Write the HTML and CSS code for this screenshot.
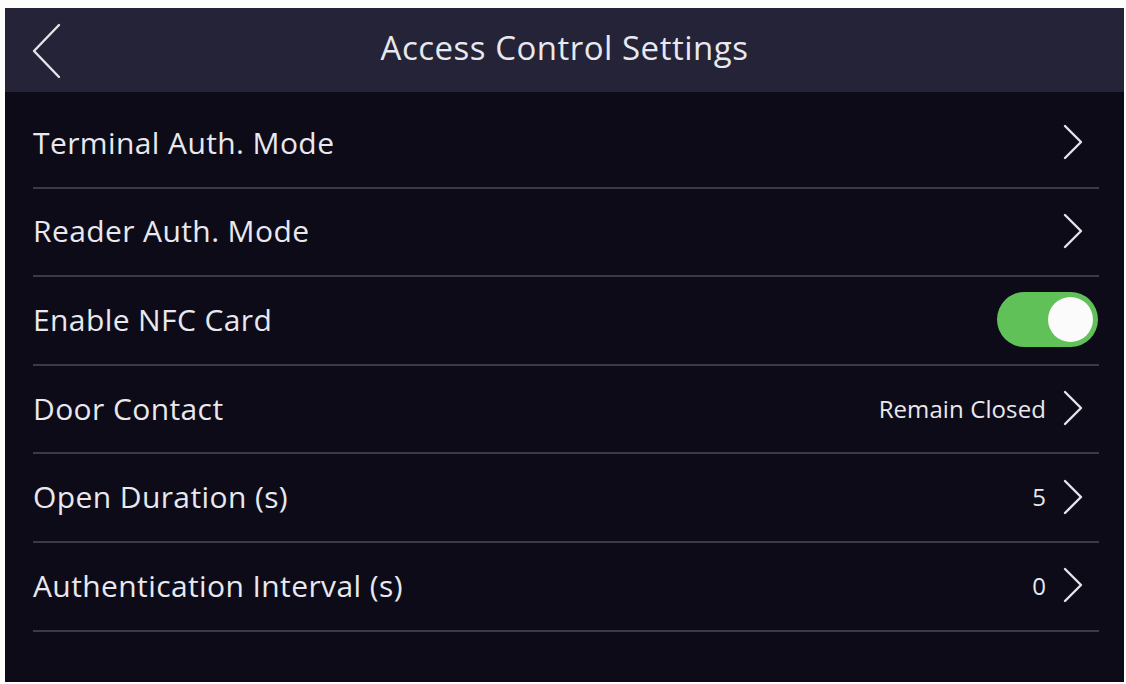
FILE: index.html
```html
<!DOCTYPE html>
<html lang="en">
<head>
  <meta charset="UTF-8">
  <meta name="viewport" content="width=device-width, initial-scale=1">
  <title>Access Control Settings</title>
  <link rel="stylesheet" href="styles.css">
</head>
<body>
  <div class="screen">
    <div class="topbar">
      <button class="back" aria-label="Back">
        <svg width="32" height="56" viewBox="0 0 32 56"><polyline points="28,2 3,28 28,54" fill="none" stroke="#e4e4ea" stroke-width="2.4" stroke-linecap="round" stroke-linejoin="round"/></svg>
      </button>
      <h1>Access Control Settings</h1>
    </div>

    <ul class="list">
      <li class="row">
        <span class="label">Terminal Auth. Mode</span>
        <span class="right"><svg class="chev" width="22" height="36" viewBox="0 0 22 36"><polyline points="3,2 19,18 3,34" fill="none" stroke="#e4e4ea" stroke-width="2.4" stroke-linecap="round" stroke-linejoin="round"/></svg></span>
      </li>
      <li class="row">
        <span class="label">Reader Auth. Mode</span>
        <span class="right"><svg class="chev" width="22" height="36" viewBox="0 0 22 36"><polyline points="3,2 19,18 3,34" fill="none" stroke="#e4e4ea" stroke-width="2.4" stroke-linecap="round" stroke-linejoin="round"/></svg></span>
      </li>
      <li class="row">
        <span class="label">Enable NFC Card</span>
        <span class="toggle on"><span class="knob"></span></span>
      </li>
      <li class="row">
        <span class="label">Door Contact</span>
        <span class="right"><span class="value">Remain Closed</span><svg class="chev" width="22" height="36" viewBox="0 0 22 36"><polyline points="3,2 19,18 3,34" fill="none" stroke="#e4e4ea" stroke-width="2.4" stroke-linecap="round" stroke-linejoin="round"/></svg></span>
      </li>
      <li class="row">
        <span class="label">Open Duration (s)</span>
        <span class="right"><span class="value">5</span><svg class="chev" width="22" height="36" viewBox="0 0 22 36"><polyline points="3,2 19,18 3,34" fill="none" stroke="#e4e4ea" stroke-width="2.4" stroke-linecap="round" stroke-linejoin="round"/></svg></span>
      </li>
      <li class="row">
        <span class="label">Authentication Interval (s)</span>
        <span class="right"><span class="value">0</span><svg class="chev" width="22" height="36" viewBox="0 0 22 36"><polyline points="3,2 19,18 3,34" fill="none" stroke="#e4e4ea" stroke-width="2.4" stroke-linecap="round" stroke-linejoin="round"/></svg></span>
      </li>
    </ul>
  </div>
</body>
</html>
```

FILE: styles.css
```css
*{
  padding: 0;
  margin: 0;
  box-sizing: border-box;
}
body{
  background: #fdfdfb;
  font-family: 'Open Sans', 'Noto Sans', sans-serif;
  color: #e8e8ee;
  height: 100vh;
  overflow: hidden;
}
.screen{
  margin: 8px 2px 0 5px;
  height: 674px;
  background: #0d0b18;
  display: flex;
  flex-direction: column;
}
.topbar{
  height: 84px;
  background: #252337;
  display: flex;
  align-items: center;
  justify-content: center;
  position: relative;
}
.topbar h1{
  font-size: 33px;
  font-weight: 400;
  letter-spacing: 0.5px;
  margin: 0 0 5px 0;
}
.back{
  position: absolute;
  left: 26px;
  top: 15px;
  background: none;
  border: none;
  cursor: pointer;
}
.list{
  list-style: none;
  padding: 8px 25px 0 28px;
}
.row{
  height: 88.6px;
  border-bottom: 2px solid #3b3a46;
  display: flex;
  align-items: center;
  justify-content: space-between;
  padding: 0 1px 2px 0;
}
.label{
  font-size: 30px;
  letter-spacing: 0.4px;
}
.right{
  display: flex;
  align-items: center;
  gap: 16px;
  margin-right: 14px;
}
.value{
  font-size: 24px;
  letter-spacing: 0.1px;
}
.toggle{
  width: 101px;
  height: 55px;
  border-radius: 28px;
  background: #5fc158;
  display: flex;
  align-items: center;
  padding: 0 5px;
}
.toggle.on{
  justify-content: flex-end;
}
.knob{
  width: 45px;
  height: 45px;
  border-radius: 50%;
  background: #fbfbfb;
}
```
